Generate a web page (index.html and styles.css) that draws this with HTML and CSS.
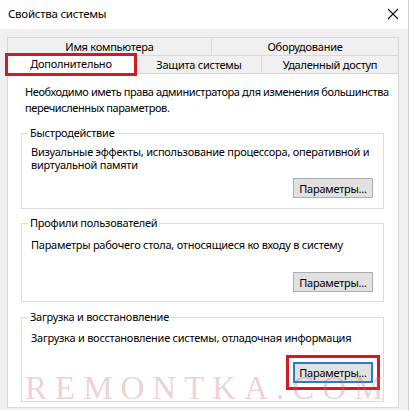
FILE: index.html
```html
<!DOCTYPE html>
<html lang="ru">
    <head>
        <meta charset="UTF-8">
        <meta name="viewport" content="width=device-width, initial-scale=1.0">
        <title>Свойства системы</title>
        <link rel="stylesheet" href="styles.css">
    </head>
    <body>
        <div class="window">
            <div class="titlebar">
                <span class="title">Свойства системы</span>
                <svg class="close" width="12" height="12" viewBox="0 0 12 12">
                    <path d="M1 1 L11 11 M11 1 L1 11" stroke="#111" stroke-width="1.1" fill="none" />
                </svg>
            </div>

            <div class="body">
                <div class="tab-row back">
                    <div class="tab tab-name">Имя компьютера</div>
                    <div class="tab tab-hw">Оборудование</div>
                </div>
                <div class="tab-row front">
                    <div class="tab tab-advanced active">Дополнительно</div>
                    <div class="tab tab-protect">Защита системы</div>
                    <div class="tab tab-remote">Удаленный доступ</div>
                </div>

                <div class="panel">
                    <p class="intro">Необходимо иметь права администратора для изменения большинства<br>перечисленных параметров.</p>

                    <fieldset class="group group-perf">
                        <legend>Быстродействие</legend>
                        <p class="group-text">Визуальные эффекты, использование процессора, оперативной и виртуальной памяти</p>
                        <div class="actions">
                            <button type="button" class="btn">Параметры...</button>
                        </div>
                    </fieldset>

                    <fieldset class="group group-profiles">
                        <legend>Профили пользователей</legend>
                        <p class="group-text">Параметры рабочего стола, относящиеся ко входу в систему</p>
                        <div class="actions">
                            <button type="button" class="btn">Параметры...</button>
                        </div>
                    </fieldset>

                    <fieldset class="group group-boot">
                        <legend>Загрузка и восстановление</legend>
                        <p class="group-text">Загрузка и восстановление системы, отладочная информация</p>
                        <div class="actions">
                            <button type="button" class="btn btn-default marked">Параметры...</button>
                        </div>
                    </fieldset>
                </div>
            </div>

            <div class="watermark">REMONTKA.COM</div>
        </div>
    </body>
</html>
```

FILE: styles.css
```css
* {
    box-sizing: border-box;
}

html, body {
    margin: 0;
    padding: 0;
}

body {
    /* Noto Sans runs wider than Segoe UI, so it is set a bit smaller and tighter */
    font-family: "Noto Sans", "Open Sans", sans-serif;
    font-size: 11px;
    letter-spacing: -0.25px;
    color: #000;
    background: #f0f0f0;
}

.window {
    position: relative;
    width: 409px;
    height: 410px;
    overflow: hidden;
    display: flex;
    flex-direction: column;
    background: #f0f0f0;
    border-right: 1px solid #cfcfcf;
}

/* title bar */

.titlebar {
    height: 29px;
    flex: none;
    display: flex;
    align-items: center;
    padding: 0 8px 2px 8px;
    background: #fff;
}

.title {
    flex: 1;
    font-size: 11.5px;
}

.close {
    margin-right: 1px;
}

/* tabs + page */

.body {
    flex: 1;
    min-height: 0;
    display: flex;
    flex-direction: column;
    padding: 8px 9px 2px 7px;
}

.tab-row {
    display: flex;
    height: 18px;
    flex: none;
}

.tab-row.front {
    margin-left: -2px;
    align-items: flex-end;
}

.tab {
    height: 18px;
    line-height: 17px;
    text-align: center;
    border: 1px solid #d9d9d9;
    border-bottom: none;
    background: #f0f0f0;
    white-space: nowrap;
}

.tab + .tab {
    border-left: none;
}

.tab-name { width: 205px; }
.tab-hw { flex: 1; }
.tab-protect { width: 125px; }
.tab-remote { flex: 1; }

.tab.active {
    position: relative;
    z-index: 2;
    width: 132px;
    height: 23px;
    margin-top: -2px;
    margin-bottom: -3px;
    line-height: 16px;
    background: #fff;
    border: 3px solid #d11b24;
}

.panel {
    flex: 1;
    min-height: 0;
    background: #fff;
    border: 1px solid #d9d9d9;
    padding: 10px 14px 0 13px;
}

.intro {
    margin: 0 0 0 4px;
    line-height: 16px;
    letter-spacing: -0.4px;
    white-space: nowrap;
}

/* group boxes */

.group {
    margin: 10px 0 0 0;
    padding: 0 10px 10px 9px;
    min-width: 0;
    border: 1px solid #dcdcdc;
}

.group legend {
    margin-left: -3px;
    padding: 0 2px;
    line-height: 14px;
}

.group-text {
    margin: 5px 0 0 0;
    line-height: 13px;
}

.actions {
    display: flex;
    justify-content: flex-end;
    margin-top: 7px;
}

.btn {
    width: 80px;
    height: 20px;
    padding: 0;
    font: inherit;
    letter-spacing: inherit;
    color: #000;
    background: #e1e1e1;
    border: 1px solid #adadad;
}

.btn-default {
    height: 21px;
    border: 2px solid #2b7cc9;
}

.btn.marked {
    outline: 3px solid #d11b24;
    outline-offset: 4px;
}

.group-profiles {
    margin-top: 7px;
    padding-bottom: 9px;
}

.group-profiles .group-text {
    margin-top: 8px;
}

.group-profiles .actions {
    margin-top: 21px;
}

.group-boot {
    margin-top: 8px;
    padding-bottom: 18px;
}

.group-boot .group-text {
    margin-top: 7px;
}

.group-boot .actions {
    margin-top: 18px;
}

/* site watermark laid over the dialog */

.watermark {
    position: absolute;
    left: 25px;
    top: 370px;
    font-family: "Liberation Serif", serif;
    font-size: 33px;
    line-height: 36px;
    letter-spacing: 8px;
    color: rgba(196, 96, 108, 0.3);
    pointer-events: none;
}
```
